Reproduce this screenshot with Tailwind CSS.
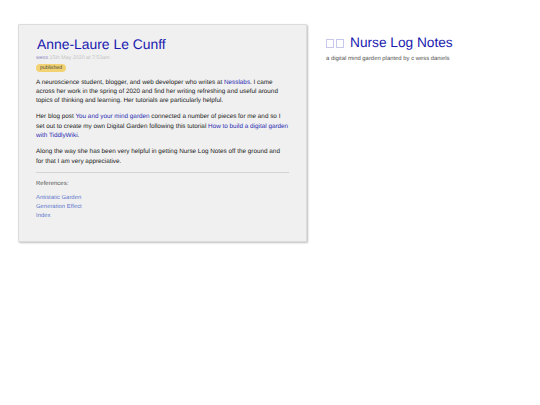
<!DOCTYPE html>
<html lang="en">
<head>
    <meta charset="UTF-8">
    <meta name="viewport" content="width=device-width, initial-scale=1.0">
    <title>Anne-Laure Le Cunff - Nurse Log Notes</title>
    <script src="https://cdn.jsdelivr.net/npm/@tailwindcss/browser@4"></script>
</head>
<body class="bg-white h-screen font-['Liberation_Sans',Arial,sans-serif] text-[#333] [text-rendering:geometricPrecision]">
    <div class="flex items-start pt-[24px] pl-[18px]">
        <!-- tiddler card -->
        <div class="w-[289px] h-[218px] bg-[#f0f0f0] border border-[#dcdcdc] rounded-[1px] shadow-[1px_1px_2px_rgba(0,0,0,0.25)] pt-[10px] px-[17px]">
            <h1 class="text-[13.9px] leading-[19px] text-[#1a1ab0] pl-[1px]">Anne-Laure Le Cunff</h1>
            <div class="text-[5.3px] leading-[7px] mt-[1px] text-[#c4c4c4]"><span class="text-[#8a8ac0]">wess</span> 15th May 2020 at 7:53am</div>
            <div class="w-[30px] h-[8px] mt-[2px] bg-[#f2d272] rounded-[4px] text-center text-[5.2px] leading-[8px] text-[#444]">published</div>
            <div class="text-[6.35px] leading-[9.3px] text-[#222] mt-[5.5px] flex flex-col gap-[7px]">
                <p>A neuroscience student, blogger, and web developer who writes at <a class="text-[#2a2ab0]">Nesslabs</a>. I came across her work in the spring of 2020 and find her writing refreshing and useful around topics of thinking and learning. Her tutorials are particularly helpful.</p>
                <p>Her blog post <a class="text-[#2a2ab0]">You and your mind garden</a> connected a number of pieces for me and so I set out to create my own Digital Garden following this tutorial <a class="text-[#2a2ab0]">How to build a digital garden with TiddlyWiki</a>.</p>
                <p>Along the way she has been very helpful in getting Nurse Log Notes off the ground and for that I am very appreciative.</p>
            </div>
            <div class="border-t border-[#d4d4d4] mt-[6.5px] pt-[7px] text-[6px] leading-[8px] text-[#555]">References:</div>
            <div class="mt-[6px] text-[5.9px] leading-[8.7px] text-[#5f78cc] flex flex-col">
                <a>Antistatic Garden</a>
                <a>Generation Effect</a>
                <a>Index</a>
            </div>
        </div>
        <!-- site title -->
        <div class="ml-[19px] mt-[10px]">
            <div class="flex items-center text-[13.7px] leading-[18px] text-[#1a1ab0]">
                <span class="w-[8px] h-[9px] border border-[#c8c8ec]"></span>
                <span class="w-[8px] h-[9px] border border-[#c8c8ec] ml-[2px] mr-[6px]"></span>
                <span>Nurse Log Notes</span>
            </div>
            <div class="text-[5.9px] leading-[8px] mt-[3px] text-[#555]">a digital mind garden planted by c wess daniels</div>
        </div>
    </div>
</body>
</html>
